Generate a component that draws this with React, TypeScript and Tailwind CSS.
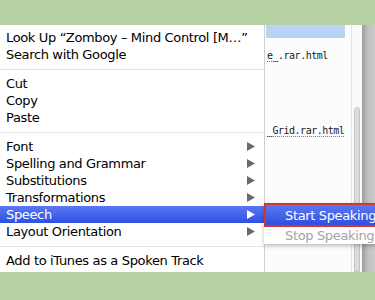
import React from 'react';

type Item = { label: string; arrow?: boolean; active?: boolean };

const groups: Item[][] = [
  [{ label: 'Look Up \u201cZomboy \u2013 Mind Control [M\u2026\u201d' }, { label: 'Search with Google' }],
  [{ label: 'Cut' }, { label: 'Copy' }, { label: 'Paste' }],
  [
    { label: 'Font', arrow: true },
    { label: 'Spelling and Grammar', arrow: true },
    { label: 'Substitutions', arrow: true },
    { label: 'Transformations', arrow: true },
    { label: 'Speech', arrow: true, active: true },
    { label: 'Layout Orientation', arrow: true },
  ],
  [{ label: 'Add to iTunes as a Spoken Track' }],
];

const Arrow = ({ white }: { white?: boolean }) => (
  <svg width="8" height="9" viewBox="0 0 8 9" className="shrink-0">
    <path d="M0 0 L8 4.5 L0 9 Z" fill={white ? '#ffffff' : '#6a6a6a'} />
  </svg>
);

const MenuRow = ({ item }: { item: Item }) => (
  <div
    className={
      item.active
        ? 'h-[17px] flex items-center pl-[6px] pr-[9px] bg-gradient-to-b from-[#5b77f2] to-[#2f4fe2] text-white'
        : 'h-[17px] flex items-center pl-[6px] pr-[9px] text-black'
    }
  >
    <span className="flex-1 whitespace-nowrap">{item.label}</span>
    {item.arrow && <Arrow white={item.active} />}
  </div>
);

export default function App() {
  return (
    <div className="w-[375px] h-[300px] bg-[#b8d1a4] relative overflow-hidden font-['DejaVu_Sans',sans-serif] text-[13px] tracking-[-0.35px] leading-none">
      <div className="h-[25px]" />
      <div className="flex h-[247px]">
        <div className="w-[265px] bg-white border-r border-[#cfcfcf] pt-[4px] pb-[3px] flex flex-col">
          {groups.map((g, gi) => (
            <React.Fragment key={gi}>
              {gi > 0 && (
                <div className="h-[12px] flex items-center">
                  <div className="h-px w-full bg-[#e4e4e4]" />
                </div>
              )}
              {g.map((it) => (
                <MenuRow key={it.label} item={it} />
              ))}
            </React.Fragment>
          ))}
        </div>
        <div className="flex-1 flex">
          <div className="w-[86px] bg-[#fcfcfc] flex flex-col font-['DejaVu_Sans_Mono',monospace] text-[10px] tracking-[-0.5px] text-[#1a1a1a]">
            <div className="h-[13px] w-[79px] ml-px bg-[#b9d3f6]" />
            <div className="mt-[13px] pl-[2px] flex">
              <span className="border-b border-dotted border-[#e05050]">e_</span>
              <span>.rar.html</span>
            </div>
            <div className="mt-[64px] pl-[2px]">
              <span className="border-b border-dotted border-[#e05050]">_Grid.rar.html</span>
            </div>
          </div>
          <div className="w-[11px] bg-[#fafafa] border-l border-[#e6e6e6] flex flex-col pt-[82px]">
            <div className="mx-auto w-[6px] flex-1 rounded-t-full bg-[#dcdcdc] border border-[#c4c4c4]" />
          </div>
          <div className="w-[13px] bg-gradient-to-r from-[#9d9d9d] via-[#c2c2c2] to-[#cbcbcb]" />
        </div>
      </div>

      <div className="absolute left-[264px] top-[203px] w-[120px] h-[41px] bg-white shadow-[0_2px_4px_rgba(0,0,0,0.25)] flex flex-col">
        <div className="h-[24px] border-2 border-[#d8352a] bg-gradient-to-b from-[#5b77f2] to-[#2f4fe2] text-white flex items-center pl-[19px] whitespace-nowrap">
          Start Speaking
        </div>
        <div className="h-[17px] flex items-center pl-[21px] text-[#a3a3a3] whitespace-nowrap">Stop Speaking</div>
      </div>
    </div>
  );
}
